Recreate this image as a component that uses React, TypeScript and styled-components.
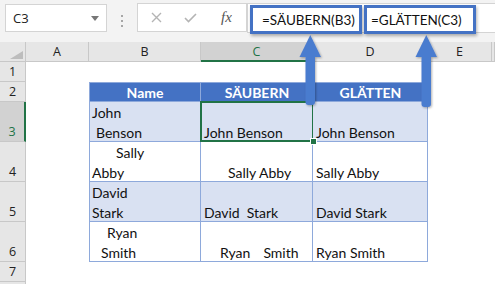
import styled, { createGlobalStyle } from "styled-components";

const GlobalStyle = createGlobalStyle`
  html, body {
    margin: 0;
    padding: 0;
    background: #ffffff;
    overflow: hidden;
  }
`

type Word = [number, string]
type Line = Word[]

interface DataRow {
    num: number
    band: boolean
    b: Line[]
    c: Line[]
    d: Line[]
}

const dataRows: DataRow[] = [
    { num: 3, band: true, b: [[[0, "John"]], [[4, "Benson"]]], c: [[[0, "John Benson"]]], d: [[[0, "John Benson"]]] },
    { num: 4, band: false, b: [[[24, "Sally"]], [[0, "Abby"]]], c: [[[24, "Sally Abby"]]], d: [[[0, "Sally Abby"]]] },
    { num: 5, band: true, b: [[[0, "David"]], [[0, "Stark"]]], c: [[[0, "David"], [7, "Stark"]]], d: [[[0, "David Stark"]]] },
    { num: 6, band: false, b: [[[15, "Ryan"]], [[9, "Smith"]]], c: [[[16, "Ryan"], [13, "Smith"]]], d: [[[0, "Ryan Smith"]]] },
]

const letters = ["A", "B", "C", "D", "E", ""]

function CellText({ lines }: { lines: Line[] }) {
    return (
        <>
            {lines.map((line, i) => (
                <TextLine key={i}>
                    {line.map(([gap, text], j) => <Word key={j} $gap={gap}>{text}</Word>)}
                </TextLine>
            ))}
        </>
    )
}

function App() {
    return (
        <Page>
            <GlobalStyle />
            <FormulaBar>
                <NameBox>
                    <span>C3</span>
                    <Caret />
                </NameBox>
                <Grip>
                    <Dot /><Dot /><Dot />
                </Grip>
                <FxBox>
                    <FxButton>
                        <svg width="11" height="11" viewBox="0 0 11 11">
                            <path d="M1 1 L10 10 M10 1 L1 10" stroke="#b4b4b4" strokeWidth="1.4" fill="none" />
                        </svg>
                    </FxButton>
                    <FxButton>
                        <svg width="13" height="10" viewBox="0 0 13 10">
                            <path d="M1 5 L4.5 8.5 L12 1" stroke="#b4b4b4" strokeWidth="1.6" fill="none" />
                        </svg>
                    </FxButton>
                    <FxLabel>fx</FxLabel>
                </FxBox>
                <FormulaInput>
                    <Callout $pad={9}>=SÄUBERN(B3)</Callout>
                    <Callout $pad={4}>=GLÄTTEN(C3)</Callout>
                </FormulaInput>
            </FormulaBar>

            <Sheet>
                <Corner><CornerMark /></Corner>
                {letters.map((l, i) => <ColHead key={i} $selected={l === "C"}>{l}</ColHead>)}

                <RowHead>1</RowHead>
                {letters.map((_, i) => <Blank key={i} />)}

                <RowHead>2</RowHead>
                <Blank />
                <TCell $head $first>Name</TCell>
                <TCell $head>SÄUBERN</TCell>
                <TCell $head>GLÄTTEN</TCell>
                <Blank />
                <Blank />

                {dataRows.map(row => (
                    <Row key={row.num} row={row} />
                ))}

                <RowHead>7</RowHead>
                {letters.map((_, i) => <Blank key={i} />)}
                <RowHead />
                {letters.map((_, i) => <Blank key={i} />)}
            </Sheet>

            <Arrows width="495" height="284" viewBox="0 0 495 284">
                <defs>
                    <filter id="shadow" x="-50%" y="-20%" width="200%" height="140%">
                        <feDropShadow dx="1" dy="1" stdDeviation="1" floodColor="#000" floodOpacity="0.3" />
                    </filter>
                </defs>
                <g filter="url(#shadow)" fill="#4a7bcf">
                    <rect x="305.5" y="54" width="9.5" height="51" rx="3" />
                    <polygon points="310.3,35 299.5,57 321,57" />
                    <rect x="421.5" y="54" width="9.5" height="53" rx="3" />
                    <polygon points="426.3,35 415.5,57 437,57" />
                </g>
            </Arrows>
        </Page>
    )
}

function Row({ row }: { row: DataRow }) {
    return (
        <>
            <RowHead $selected={row.num === 3}>{row.num}</RowHead>
            <Blank />
            <TCell $band={row.band} $first><CellText lines={row.b} /></TCell>
            <TCell $band={row.band} $active={row.num === 3}><CellText lines={row.c} /></TCell>
            <TCell $band={row.band}><CellText lines={row.d} /></TCell>
            <Blank />
            <Blank />
        </>
    )
}

export default App

const Page = styled.div`
    position: relative;
    width: 495px;
    height: 284px;
    overflow: hidden;
    background: #ffffff;
`

const FormulaBar = styled.div`
    display: flex;
    align-items: flex-start;
    height: 42px;
    box-sizing: border-box;
    padding: 3px 0 0 5px;
    background: #f3f3f3;
`

const NameBox = styled.div`
    display: flex;
    align-items: center;
    justify-content: space-between;
    box-sizing: border-box;
    margin-top: 1px;
    width: 102px;
    height: 28px;
    padding: 0 7px 0 7px;
    background: #ffffff;
    border: 1px solid #d4d4d4;
    font-family: "Open Sans", sans-serif;
    font-size: 13px;
    color: #222;
`

const Caret = styled.span`
    width: 0;
    height: 0;
    border-left: 4px solid transparent;
    border-right: 4px solid transparent;
    border-top: 5px solid #777;
`

const Grip = styled.div`
    display: flex;
    flex-direction: column;
    align-items: center;
    gap: 3px;
    width: 30px;
    padding-top: 12px;
`

const Dot = styled.span`
    width: 2px;
    height: 2px;
    background: #a6a6a6;
`

const FxBox = styled.div`
    display: flex;
    align-items: center;
    box-sizing: border-box;
    width: 110px;
    height: 29px;
    padding-left: 2px;
    background: #ffffff;
    border: 1px solid #d4d4d4;
`

const FxButton = styled.span`
    display: flex;
    align-items: center;
    justify-content: center;
    width: 34px;
    height: 100%;
`

const FxLabel = styled.span`
    width: 40px;
    text-align: center;
    font-family: "Liberation Serif", serif;
    font-style: italic;
    font-size: 15px;
    color: #555;
`

const FormulaInput = styled.div`
    flex: 1;
    display: flex;
    align-items: flex-start;
    gap: 2px;
    box-sizing: border-box;
    height: 30px;
    padding: 1px 0 0 2px;
    background: #ffffff;
    border: 1px solid #d4d4d4;
    border-right: none;
`

const Callout = styled.div<{ $pad: number }>`
    display: flex;
    align-items: center;
    box-sizing: border-box;
    width: 112px;
    height: 29px;
    padding-left: ${p => p.$pad}px;
    border: 3px solid #4472c4;
    background: #ffffff;
    box-shadow: 1px 2px 3px rgba(0, 0, 0, 0.3);
    font-family: "Lato", sans-serif;
    font-size: 13.5px;
    color: #111;
    white-space: nowrap;
    position: relative;
    z-index: 1;
`

const Sheet = styled.div`
    display: grid;
    grid-template-columns: 26px 63px 112px 112px 115px 64px 1fr;
    grid-template-rows: 20px 20px 20px 40px 40px 40px 40px 20px 20px;
`

const Corner = styled.div`
    position: relative;
    box-sizing: border-box;
    background: #e6e6e6;
    border-right: 1px solid #c8c8c8;
    border-bottom: 1px solid #c8c8c8;
`

const CornerMark = styled.span`
    position: absolute;
    right: 2px;
    bottom: 2px;
    width: 13px;
    height: 8px;
    background: #bdbdbd;
    clip-path: polygon(100% 0, 100% 100%, 0 100%);
`

const ColHead = styled.div<{ $selected?: boolean }>`
    display: flex;
    align-items: center;
    justify-content: center;
    box-sizing: border-box;
    background: ${p => p.$selected ? "#d2d2d2" : "#e6e6e6"};
    border-right: 1px solid #c8c8c8;
    border-bottom: ${p => p.$selected ? "2px solid #217346" : "1px solid #c8c8c8"};
    font-family: "Open Sans", sans-serif;
    font-size: 12.5px;
    color: ${p => p.$selected ? "#217346" : "#222"};
`

const RowHead = styled.div<{ $selected?: boolean }>`
    display: flex;
    align-items: flex-end;
    justify-content: center;
    box-sizing: border-box;
    padding-bottom: 0;
    background: ${p => p.$selected ? "#d2d2d2" : "#e6e6e6"};
    border-right: ${p => p.$selected ? "2px solid #217346" : "1px solid #c8c8c8"};
    border-bottom: 1px solid #c8c8c8;
    font-family: "Open Sans", sans-serif;
    font-size: 12.5px;
    line-height: 18px;
    color: ${p => p.$selected ? "#217346" : "#222"};
`

const Blank = styled.div`
    background: #ffffff;
`

const TCell = styled.div<{ $head?: boolean; $band?: boolean; $first?: boolean; $active?: boolean }>`
    position: relative;
    display: flex;
    flex-direction: column;
    justify-content: ${p => p.$head ? "center" : "flex-end"};
    align-items: ${p => p.$head ? "center" : "stretch"};
    box-sizing: border-box;
    padding: 0 2px 0 ${p => p.$first ? 2 : 3}px;
    background: ${p => p.$head ? "#4472c4" : p.$band ? "#d9e1f2" : "#ffffff"};
    border-right: 1px solid #8ea9db;
    border-bottom: 1px solid #8ea9db;
    border-left: ${p => p.$first ? "1px solid #8ea9db" : "none"};
    border-top: ${p => p.$head ? "1px solid #8ea9db" : "none"};
    font-family: "Lato", sans-serif;
    font-size: 14px;
    font-weight: ${p => p.$head ? 700 : 400};
    color: ${p => p.$head ? "#ffffff" : "#111"};

    ${p => p.$active && `
        &::after {
            content: "";
            position: absolute;
            top: -1px;
            left: -1px;
            right: -2px;
            bottom: -1px;
            border: 2px solid #217346;
        }
        &::before {
            content: "";
            position: absolute;
            right: -5px;
            bottom: -4px;
            width: 5px;
            height: 5px;
            background: #217346;
            border: 1px solid #ffffff;
            z-index: 1;
        }
    `}
`

const TextLine = styled.div`
    display: flex;
    box-sizing: border-box;
    height: 20px;
    padding-top: 3px;
    line-height: 17px;
    white-space: nowrap;
`

const Word = styled.span<{ $gap: number }>`
    margin-left: ${p => p.$gap}px;
`

const Arrows = styled.svg`
    position: absolute;
    left: 0;
    top: 0;
    pointer-events: none;
    z-index: 2;
`
